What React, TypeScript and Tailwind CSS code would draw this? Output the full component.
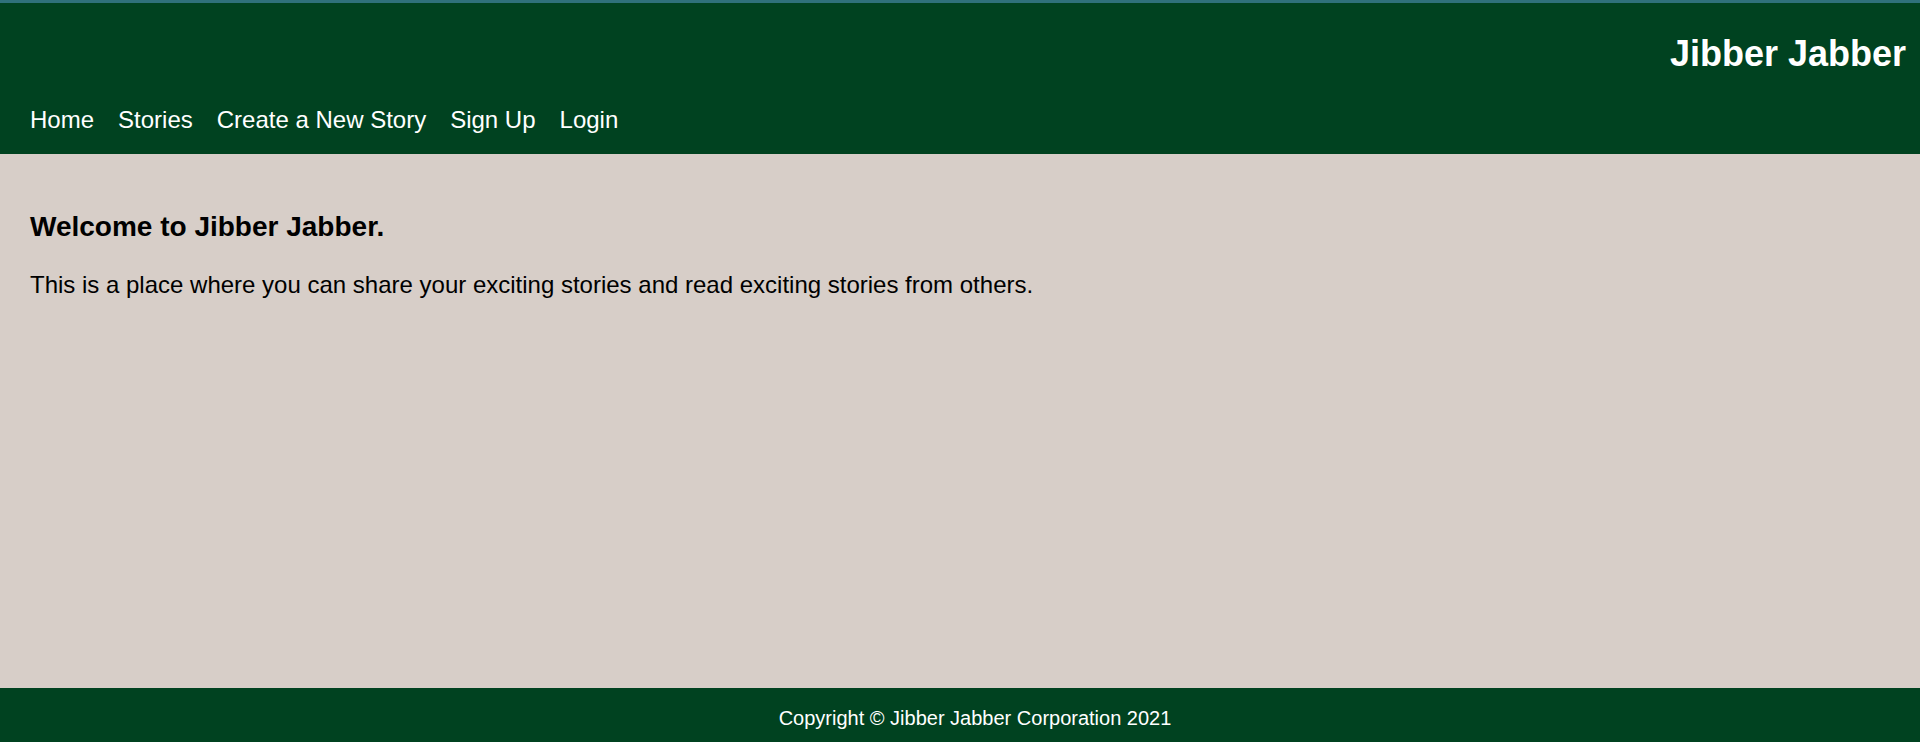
const navLinks = ["Home", "Stories", "Create a New Story", "Sign Up", "Login"];

export default function App() {
  return (
    <div className="flex min-h-screen flex-col bg-[#d7cec8] font-['Liberation_Sans',Arial,sans-serif]">
      {/* Header */}
      <header className="border-t-[3px] border-[#2f717b] bg-[#004220] text-white">
        <div className="pt-[30px] pr-[14px] text-right">
          <h1 className="text-[36px] font-bold leading-[41px]">Jibber Jabber</h1>
        </div>
        <nav className="mt-[32px] flex gap-6 pb-[20px] pl-[30px]">
          {navLinks.map((link) => (
            <a key={link} href="#" className="text-[24px] leading-[28px] text-white">
              {link}
            </a>
          ))}
        </nav>
      </header>

      {/* Main */}
      <main className="flex-1 px-[30px] pt-[57px] text-black">
        <h2 className="text-[28px] font-bold leading-[32px]">Welcome to Jibber Jabber.</h2>
        <p className="mt-[28px] text-[24px] leading-[28px]">
          This is a place where you can share your exciting stories and read exciting stories from others.
        </p>
      </main>

      {/* Footer */}
      <footer className="h-[54px] bg-[#004220] pl-[30px] pt-[19px] text-center text-white">
        <p className="text-[20px] leading-[23px]">Copyright © Jibber Jabber Corporation 2021</p>
      </footer>
    </div>
  );
}
